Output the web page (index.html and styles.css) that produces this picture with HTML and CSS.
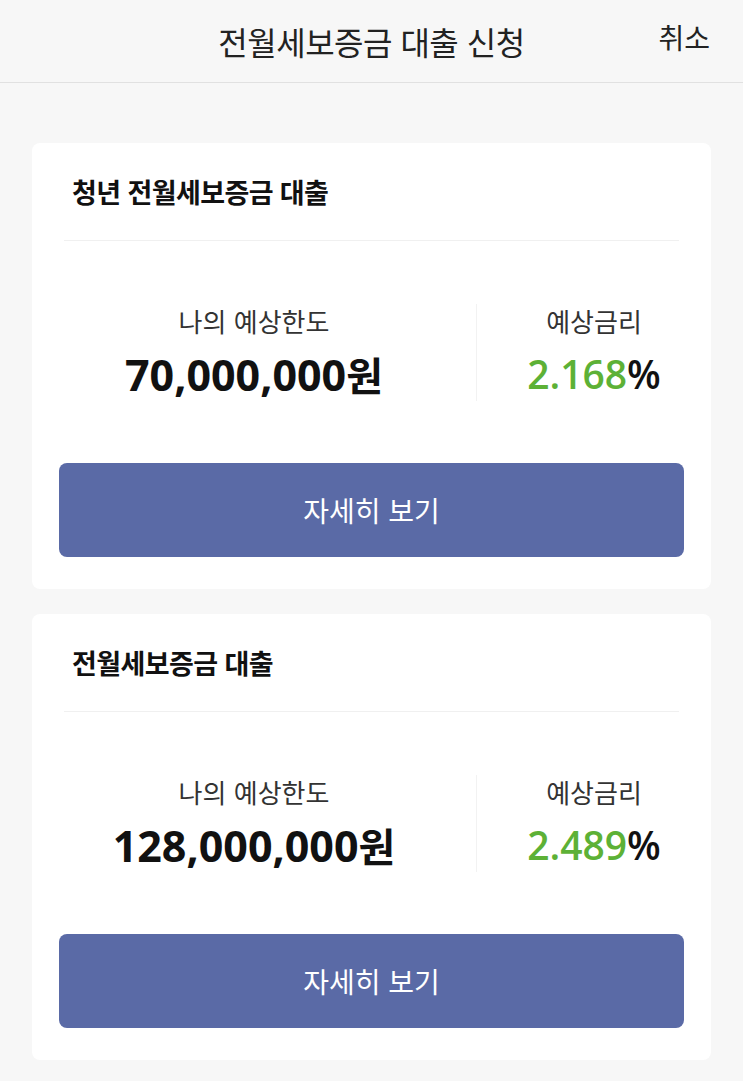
FILE: index.html
```html
<!DOCTYPE html>
<html lang="ko">
<head>
    <meta charset="UTF-8">
    <meta name="viewport" content="width=device-width, initial-scale=1.0">
    <title>전월세보증금 대출 신청</title>
    <link rel="stylesheet" href="styles.css">
</head>
<body>

    <header class="topbar">
        <h1 class="topbar-title">전월세보증금 대출 신청</h1>
        <a class="topbar-cancel" href="#">취소</a>
    </header>

    <main class="list">

        <section class="card">
            <div class="card-head">
                <h2 class="card-title">청년 전월세보증금 대출</h2>
            </div>
            <div class="stats">
                <div class="stat stat-limit">
                    <div class="stat-label">나의 예상한도</div>
                    <div class="stat-value">70,000,000<span class="won">원</span></div>
                </div>
                <div class="stat stat-rate">
                    <div class="stat-label">예상금리</div>
                    <div class="stat-value rate"><span class="rate-num">2.168</span>%</div>
                </div>
            </div>
            <button class="detail-btn">자세히 보기</button>
        </section>

        <section class="card">
            <div class="card-head">
                <h2 class="card-title">전월세보증금 대출</h2>
            </div>
            <div class="stats">
                <div class="stat stat-limit">
                    <div class="stat-label">나의 예상한도</div>
                    <div class="stat-value">128,000,000<span class="won">원</span></div>
                </div>
                <div class="stat stat-rate">
                    <div class="stat-label">예상금리</div>
                    <div class="stat-value rate"><span class="rate-num">2.489</span>%</div>
                </div>
            </div>
            <button class="detail-btn">자세히 보기</button>
        </section>

    </main>

</body>
</html>
```

FILE: styles.css
```css
body {
    margin: 0;
    background-color: #f7f7f7;
    font-family: "Noto Sans CJK KR", "Noto Sans", sans-serif;
    color: #111;
}

/* top bar */
.topbar {
    height: 82px;
    border-bottom: 1px solid #e1e1e1;
    display: flex;
    align-items: center;
    justify-content: center;
    position: relative;
}
.topbar-title {
    margin: 0;
    font-size: 32px;
    font-weight: 400;
    color: #222;
    letter-spacing: -0.5px;
}
.topbar-cancel {
    position: absolute;
    right: 33px;
    top: 17px;
    font-size: 28px;
    color: #222;
    text-decoration: none;
}

/* cards */
.list {
    padding: 60px 32px 0 32px;
    display: flex;
    flex-direction: column;
    gap: 25px;
}
.card {
    background-color: #fff;
    border-radius: 8px;
    padding-bottom: 32px;
    display: flex;
    flex-direction: column;
}
.card-head {
    margin: 0 32px;
    height: 97px;
    border-bottom: 1px solid #f0f0f0;
    display: flex;
    align-items: center;
    padding-left: 8px;
}
.card-title {
    margin: 0;
    font-size: 27px;
    font-weight: 700;
    letter-spacing: -0.6px;
    color: #111;
}

.stats {
    display: flex;
    margin-top: 63px;
    height: 97px;
}
.stat {
    display: flex;
    flex-direction: column;
    align-items: center;
}
.stat-limit {
    width: 444px;
    border-right: 1px solid #f2f2f2;
}
.stat-rate {
    flex: 1;
}
.stat-label {
    font-size: 26px;
    line-height: 34px;
    color: #333;
    font-weight: 400;
}
.stat-value {
    margin-top: 11px;
    font-family: "Open Sans", "Noto Sans CJK KR", sans-serif;
    font-size: 43px;
    line-height: 50px;
    font-weight: 700;
    color: #111;
}
.won {
    font-family: "Noto Sans CJK KR", sans-serif;
    font-size: 40px;
}
.rate {
    font-size: 39px;
    font-weight: 600;
}
.rate-num {
    color: #5db136;
}

.detail-btn {
    margin: 62px 27px 0 27px;
    height: 94px;
    border: none;
    border-radius: 8px;
    background-color: #5a6aa6;
    color: #fff;
    font-family: "Noto Sans CJK KR", sans-serif;
    font-size: 28px;
    font-weight: 400;
    cursor: pointer;
}
```
